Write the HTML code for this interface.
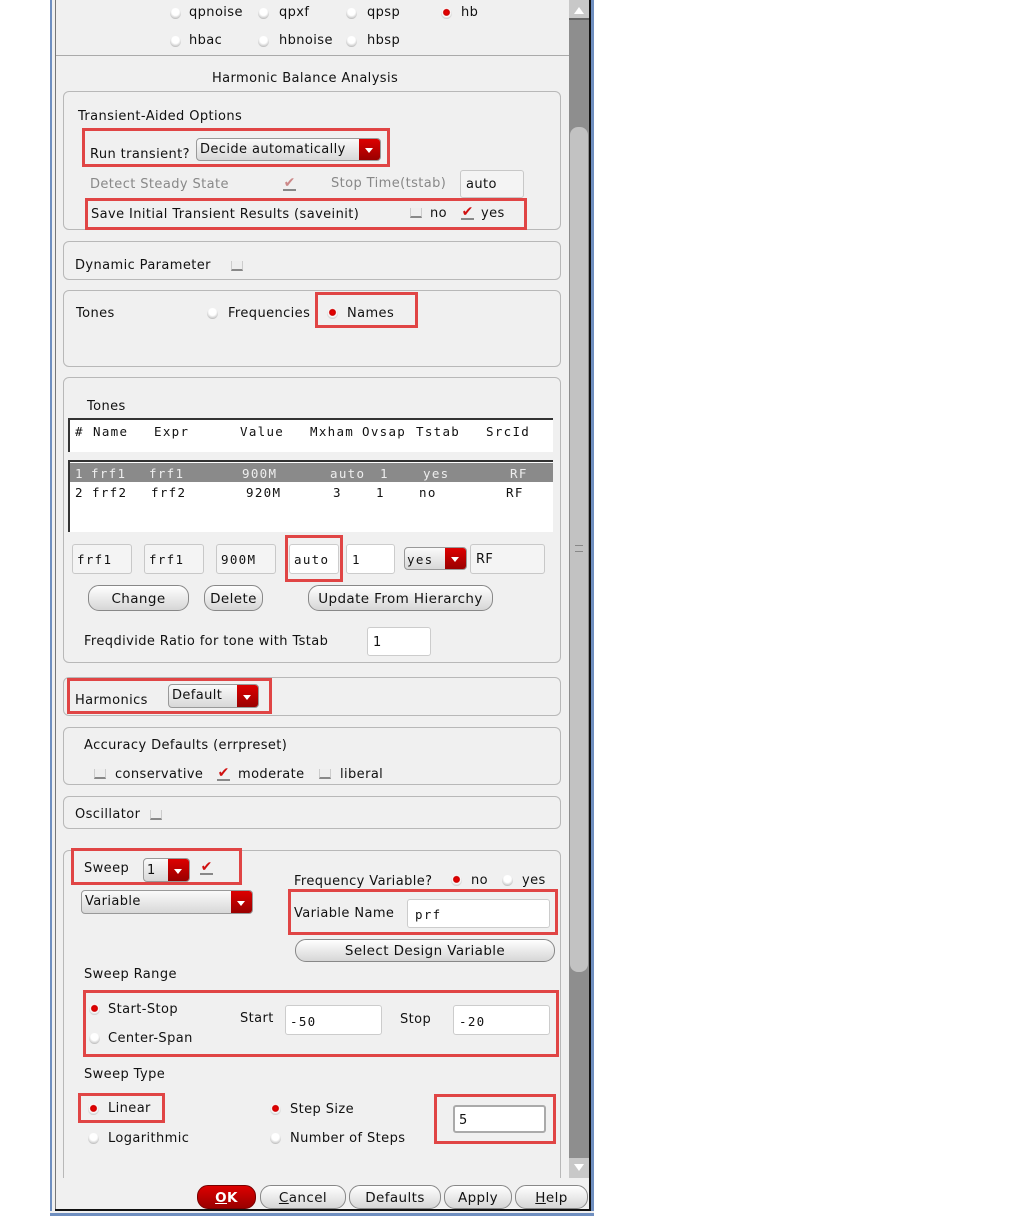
<!DOCTYPE html>
<html><head><meta charset="utf-8"><style>
*{box-sizing:border-box;margin:0;padding:0}
html,body{width:1013px;height:1216px;overflow:hidden}
body{background:#fff;position:relative;font-family:"DejaVu Sans","Liberation Sans",sans-serif;font-size:13px;letter-spacing:0.4px;color:#111}
.a{position:absolute;white-space:nowrap}
.mono{font-family:"DejaVu Sans Mono","Liberation Mono",monospace;font-size:12.5px;letter-spacing:1.3px}
.panel{position:absolute;left:63px;width:498px;border:1px solid #b8b8b8;border-radius:6px}
.red{position:absolute;border:3px solid #e04545}
.rad{position:absolute;width:11px;height:11px;border-radius:50%;background:radial-gradient(circle at 50% 35%,#fff 40%,#ccc 70%,#888 100%)}
.rad.on{background:radial-gradient(circle at 50% 40%,#e00 0,#c00 35%,#fff 45%,#ccc 75%,#888 100%)}
.cb{position:absolute;width:12px;height:10px;border-bottom:2px solid #888;border-left:1px solid #ccc;border-right:1px solid #ccc;background:#eee}
.ck{position:absolute;color:#d01010;font-size:14px;font-weight:bold;border-bottom:2px solid #888;line-height:11px;width:13px;text-align:center;letter-spacing:0}
.fld{position:absolute;background:#fff;border:1px solid #aaa;border-radius:3px}
.fld2{position:absolute;background:#f4f4f4;border:1px solid #c8c8c8;border-radius:3px}
.combo{position:absolute;border:1px solid #999;border-radius:4px;background:linear-gradient(#fafafa,#d8d8d8);overflow:hidden}
.combo .arr{position:absolute;right:0;top:0;bottom:0;width:21px;background:linear-gradient(#d00,#900)}
.combo .arr:after{content:"";position:absolute;left:6px;top:45%;border-left:4px solid transparent;border-right:4px solid transparent;border-top:5px solid #fff}
.btn{position:absolute;border:1px solid #888;border-radius:11px;background:linear-gradient(#fff,#d6d6d6);text-align:center;font-size:13.5px;line-height:20px}
</style></head><body>
<div class="a" style="left:50px;top:0;width:544px;height:1216px;background:#f0f0f0"></div>
<div class="a" style="left:50px;top:0;width:2px;height:1216px;background:#6f8fc0"></div>
<div class="a" style="left:55px;top:0;width:1px;height:1211px;background:#777"></div>
<div class="a" style="left:591px;top:0;width:3px;height:1216px;background:#6f8fc0"></div>
<div class="a" style="left:589px;top:0;width:2px;height:1211px;background:#111"></div>
<div class="a" style="left:569px;top:0;width:20px;height:1180px;background:#8e8e8e"></div>
<div class="a" style="left:569px;top:0;width:20px;height:20px;background:#c8c8c8;border-bottom:2px solid #666"></div>
<div class="a" style="left:574px;top:7px;border-left:5px solid transparent;border-right:5px solid transparent;border-bottom:7px solid #fff"></div>
<div class="a" style="left:570px;top:127px;width:18px;height:845px;background:#c2c2c2;border-radius:8px"></div>
<div class="a" style="left:575px;top:545px;width:8px;height:7px;border-top:1px solid #888;border-bottom:1px solid #888"></div>
<div class="a" style="left:569px;top:1158px;width:20px;height:20px;background:#c8c8c8"></div>
<div class="a" style="left:574px;top:1164px;border-left:5px solid transparent;border-right:5px solid transparent;border-top:7px solid #fff"></div>

<div class="rad" style="left:170px;top:8px"></div><div class="a" style="left:189px;top:5px">qpnoise</div>
<div class="rad" style="left:258px;top:8px"></div><div class="a" style="left:279px;top:5px">qpxf</div>
<div class="rad" style="left:346px;top:8px"></div><div class="a" style="left:367px;top:5px">qpsp</div>
<div class="rad on" style="left:441px;top:8px"></div><div class="a" style="left:461px;top:5px">hb</div>
<div class="rad" style="left:170px;top:36px"></div><div class="a" style="left:189px;top:33px">hbac</div>
<div class="rad" style="left:258px;top:36px"></div><div class="a" style="left:279px;top:33px">hbnoise</div>
<div class="rad" style="left:346px;top:36px"></div><div class="a" style="left:367px;top:33px">hbsp</div>
<div class="a" style="left:56px;top:55px;width:513px;height:1px;background:#aaa"></div>
<div class="a" style="left:212px;top:71px">Harmonic Balance Analysis</div>

<div class="panel" style="top:91px;height:139px"></div>
<div class="a" style="left:78px;top:109px">Transient-Aided Options</div>
<div class="a" style="left:90px;top:147px">Run transient?</div>
<div class="combo" style="left:196px;top:138px;width:185px;height:23px"><span class="a" style="left:3px;top:3px">Decide automatically</span><div class="arr"></div></div>
<div class="red" style="left:82px;top:128px;width:308px;height:39px"></div>
<div class="a" style="left:90px;top:177px;color:#888">Detect Steady State</div>
<div class="ck" style="left:283px;top:178px;color:#c88">✔</div>
<div class="a" style="left:331px;top:176px;color:#888">Stop Time(tstab)</div>
<div class="fld2" style="left:460px;top:170px;width:64px;height:28px"></div><div class="a" style="left:466px;top:177px">auto</div>
<div class="red" style="left:85px;top:198px;width:442px;height:32px"></div>
<div class="a" style="left:91px;top:207px">Save Initial Transient Results (saveinit)</div>
<div class="cb" style="left:410px;top:208px"></div><div class="a" style="left:430px;top:206px">no</div>
<div class="ck" style="left:461px;top:207px">✔</div><div class="a" style="left:481px;top:206px">yes</div>

<div class="panel" style="top:241px;height:39px"></div>
<div class="a" style="left:75px;top:258px">Dynamic Parameter</div>
<div class="cb" style="left:231px;top:261px"></div>

<div class="panel" style="top:290px;height:77px"></div>
<div class="a" style="left:76px;top:306px">Tones</div>
<div class="rad" style="left:207px;top:308px"></div><div class="a" style="left:228px;top:306px">Frequencies</div>
<div class="red" style="left:315px;top:292px;width:103px;height:36px"></div>
<div class="rad on" style="left:327px;top:308px"></div><div class="a" style="left:347px;top:306px">Names</div>

<div class="panel" style="top:377px;height:286px"></div>
<div class="a" style="left:87px;top:399px">Tones</div>
<div class="a" style="left:68px;top:418px;width:485px;height:34px;background:#fff;border-top:2px solid #333;border-left:2px solid #333"></div>
<div class="mono">
<div class="a" style="left:75px;top:424px">#</div><div class="a" style="left:93px;top:424px">Name</div><div class="a" style="left:154px;top:424px">Expr</div><div class="a" style="left:240px;top:424px">Value</div><div class="a" style="left:310px;top:424px">Mxham</div><div class="a" style="left:362px;top:424px">Ovsap</div><div class="a" style="left:416px;top:424px">Tstab</div><div class="a" style="left:486px;top:424px">SrcId</div>
</div>
<div class="a" style="left:68px;top:460px;width:485px;height:72px;background:#fff;border-top:2px solid #333;border-left:2px solid #333"></div>
<div class="a" style="left:70px;top:463px;width:483px;height:19px;background:#8a8a8a"></div>
<div class="mono" style="color:#eee">
<div class="a" style="left:75px;top:466px">1</div><div class="a" style="left:91px;top:466px">frf1</div><div class="a" style="left:149px;top:466px">frf1</div><div class="a" style="left:242px;top:466px">900M</div><div class="a" style="left:330px;top:466px">auto</div><div class="a" style="left:380px;top:466px">1</div><div class="a" style="left:423px;top:466px">yes</div><div class="a" style="left:510px;top:466px">RF</div>
</div>
<div class="mono">
<div class="a" style="left:75px;top:485px">2</div><div class="a" style="left:92px;top:485px">frf2</div><div class="a" style="left:151px;top:485px">frf2</div><div class="a" style="left:246px;top:485px">920M</div><div class="a" style="left:333px;top:485px">3</div><div class="a" style="left:376px;top:485px">1</div><div class="a" style="left:419px;top:485px">no</div><div class="a" style="left:506px;top:485px">RF</div>
</div>
<div class="fld2" style="left:72px;top:544px;width:60px;height:30px"></div><div class="a mono" style="left:77px;top:552px">frf1</div>
<div class="fld2" style="left:144px;top:544px;width:60px;height:30px"></div><div class="a mono" style="left:149px;top:552px">frf1</div>
<div class="fld2" style="left:216px;top:544px;width:60px;height:30px"></div><div class="a mono" style="left:221px;top:552px">900M</div>
<div class="fld" style="left:289px;top:544px;width:50px;height:30px;border-color:#ccc"></div><div class="a mono" style="left:294px;top:552px">auto</div>
<div class="red" style="left:285px;top:535px;width:58px;height:47px"></div>
<div class="fld" style="left:346px;top:544px;width:49px;height:30px;border-color:#ccc"></div><div class="a mono" style="left:352px;top:552px">1</div>
<div class="combo" style="left:404px;top:547px;width:63px;height:23px"><span class="a mono" style="left:2px;top:4px">yes</span><div class="arr"></div></div>
<div class="fld2" style="left:470px;top:544px;width:75px;height:30px"></div><div class="a" style="left:476px;top:552px">RF</div>
<div class="btn" style="left:88px;top:585px;width:101px;height:26px;line-height:26px">Change</div>
<div class="btn" style="left:204px;top:585px;width:59px;height:26px;line-height:26px">Delete</div>
<div class="btn" style="left:308px;top:585px;width:185px;height:26px;line-height:26px">Update From Hierarchy</div>
<div class="a" style="left:84px;top:634px">Freqdivide Ratio for tone with Tstab</div>
<div class="fld" style="left:367px;top:627px;width:64px;height:29px;border-color:#ccc"></div><div class="a" style="left:373px;top:635px">1</div>

<div class="panel" style="top:677px;height:39px"></div>
<div class="a" style="left:75px;top:693px">Harmonics</div>
<div class="combo" style="left:168px;top:684px;width:91px;height:24px"><span class="a" style="left:3px;top:3px">Default</span><div class="arr"></div></div>
<div class="red" style="left:67px;top:678px;width:205px;height:36px"></div>

<div class="panel" style="top:727px;height:58px"></div>
<div class="a" style="left:84px;top:738px">Accuracy Defaults (errpreset)</div>
<div class="cb" style="left:94px;top:769px"></div><div class="a" style="left:115px;top:767px">conservative</div>
<div class="ck" style="left:217px;top:768px">✔</div><div class="a" style="left:238px;top:767px">moderate</div>
<div class="cb" style="left:319px;top:769px"></div><div class="a" style="left:340px;top:767px">liberal</div>

<div class="panel" style="top:796px;height:33px"></div>
<div class="a" style="left:75px;top:807px">Oscillator</div>
<div class="cb" style="left:150px;top:810px"></div>

<div class="panel" style="top:850px;height:340px"></div>
<div class="a" style="left:84px;top:861px">Sweep</div>
<div class="combo" style="left:143px;top:858px;width:47px;height:24px"><span class="a" style="left:3px;top:4px">1</span><div class="arr"></div></div>
<div class="ck" style="left:200px;top:862px">✔</div>
<div class="red" style="left:71px;top:848px;width:171px;height:37px"></div>
<div class="combo" style="left:81px;top:890px;width:172px;height:24px"><span class="a" style="left:3px;top:3px">Variable</span><div class="arr"></div></div>
<div class="a" style="left:294px;top:874px">Frequency Variable?</div>
<div class="rad on" style="left:451px;top:875px"></div><div class="a" style="left:471px;top:873px">no</div>
<div class="rad" style="left:502px;top:875px"></div><div class="a" style="left:522px;top:873px">yes</div>
<div class="red" style="left:288px;top:889px;width:270px;height:46px"></div>
<div class="a" style="left:294px;top:906px">Variable Name</div>
<div class="fld" style="left:407px;top:899px;width:143px;height:29px;border-color:#ccc"></div><div class="a mono" style="left:415px;top:907px">prf</div>
<div class="btn" style="left:295px;top:939px;width:260px;height:23px;line-height:23px">Select Design Variable</div>
<div class="a" style="left:84px;top:967px">Sweep Range</div>
<div class="red" style="left:83px;top:990px;width:476px;height:67px"></div>
<div class="rad on" style="left:89px;top:1004px"></div><div class="a" style="left:108px;top:1002px">Start-Stop</div>
<div class="rad" style="left:89px;top:1033px"></div><div class="a" style="left:108px;top:1031px">Center-Span</div>
<div class="a" style="left:240px;top:1011px">Start</div>
<div class="fld" style="left:285px;top:1005px;width:97px;height:30px;border-color:#ccc"></div><div class="a mono" style="left:290px;top:1014px">-50</div>
<div class="a" style="left:400px;top:1012px">Stop</div>
<div class="fld" style="left:453px;top:1005px;width:97px;height:30px;border-color:#ccc"></div><div class="a mono" style="left:459px;top:1014px">-20</div>
<div class="a" style="left:84px;top:1067px">Sweep Type</div>
<div class="red" style="left:78px;top:1093px;width:87px;height:30px"></div>
<div class="rad on" style="left:88px;top:1104px"></div><div class="a" style="left:108px;top:1101px">Linear</div>
<div class="rad" style="left:88px;top:1133px"></div><div class="a" style="left:108px;top:1131px">Logarithmic</div>
<div class="rad on" style="left:270px;top:1104px"></div><div class="a" style="left:290px;top:1102px">Step Size</div>
<div class="rad" style="left:270px;top:1133px"></div><div class="a" style="left:290px;top:1131px">Number of Steps</div>
<div class="red" style="left:434px;top:1094px;width:122px;height:50px"></div>
<div class="fld" style="left:453px;top:1105px;width:93px;height:28px;border:2px solid #aaa"></div><div class="a" style="left:459px;top:1113px">5</div>

<div class="a" style="left:56px;top:1178px;width:533px;height:31px;background:#f0f0f0"></div>
<div class="a" style="left:55px;top:1209px;width:536px;height:2px;background:#111"></div>
<div class="a" style="left:50px;top:1211px;width:544px;height:2px;background:#f0f0f0"></div>
<div class="a" style="left:50px;top:1213px;width:544px;height:3px;background:#6f8fc0"></div>
<div class="a" style="left:63px;top:1170px;width:1px;height:8px;background:#b8b8b8"></div>
<div class="btn" style="left:197px;top:1185px;width:59px;height:24px;line-height:24px;background:linear-gradient(#d00,#900);color:#fff;font-weight:bold;border-color:#700"><u>O</u>K</div>
<div class="btn" style="left:260px;top:1185px;width:86px;height:24px;line-height:24px"><u>C</u>ancel</div>
<div class="btn" style="left:349px;top:1185px;width:92px;height:24px;line-height:24px">Defaults</div>
<div class="btn" style="left:444px;top:1185px;width:68px;height:24px;line-height:24px">Apply</div>
<div class="btn" style="left:515px;top:1185px;width:73px;height:24px;line-height:24px"><u>H</u>elp</div>
</body></html>
